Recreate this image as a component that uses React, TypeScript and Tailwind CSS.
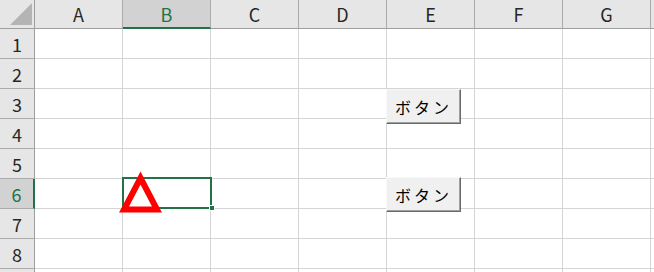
import React from "react";

const cols = ["A", "B", "C", "D", "E", "F", "G", ""];
const rows = [1, 2, 3, 4, 5, 6, 7, 8, 9];

export default function App() {
  return (
    <div
      className="relative w-[654px] h-[272px] overflow-hidden bg-white"
      style={{ fontFamily: '"Noto Sans CJK JP", "Liberation Sans", sans-serif' }}
    >
      <div className="grid grid-cols-[35px_repeat(8,88px)] grid-rows-[29px_repeat(9,30px)]">
        {/* corner */}
        <div className="relative bg-[#e6e6e6] border-r border-b border-[#9e9e9e]">
          <svg className="absolute left-0 top-0" width="35" height="28">
            <polygon points="32,3 32,25 10,25" fill="#b4b4b4" />
          </svg>
        </div>
        {cols.map((c, i) => (
          <div
            key={c + i}
            className={
              c === "B"
                ? "flex items-center justify-center bg-[#d2d2d2] border-r border-[#ababab] border-b-2 border-b-[#217346] text-[18px] text-[#217346]"
                : "flex items-center justify-center bg-[#e6e6e6] border-r border-[#ababab] border-b border-b-[#9e9e9e] text-[18px] text-[#262626]"
            }
          >
            <span className="leading-none">{c}</span>
          </div>
        ))}
        {rows.map((r) => (
          <React.Fragment key={r}>
            <div
              className={
                r === 6
                  ? "flex items-center justify-center bg-[#d2d2d2] border-b border-[#ababab] border-r-2 border-r-[#217346] text-[18px] text-[#217346]"
                  : "flex items-center justify-center bg-[#e6e6e6] border-b border-[#ababab] border-r border-r-[#9e9e9e] text-[18px] text-[#262626]"
              }
            >
              {r < 9 && <span className="leading-none">{r}</span>}
            </div>
            {cols.map((c, i) => (
              <div key={c + i} className="border-r border-b border-[#d4d4d4]" />
            ))}
          </React.Fragment>
        ))}
      </div>

      {/* selection B6 */}
      <div className="absolute left-[122px] top-[177px] w-[90px] h-[32px] border-2 border-[#217346]" />
      <div className="absolute left-[209px] top-[205px] w-[6px] h-[6px] bg-[#217346] border border-white" />

      {/* triangle */}
      <svg className="absolute left-[117px] top-[170px]" width="48" height="48">
        <polygon
          points="23.5,8 40,39.5 7,39.5"
          fill="none"
          stroke="#ff0000"
          strokeWidth="6"
          strokeLinejoin="miter"
        />
      </svg>

      {/* buttons */}
      <div className="absolute left-[386px] top-[89px] w-[75px] h-[35px] flex items-center justify-center bg-[#f0f0f0] border border-t-[#f8f8f8] border-l-[#f8f8f8] border-r-[#696969] border-b-[#696969] shadow-[inset_-1px_-1px_0_#a0a0a0] text-[16px] text-black tracking-[3px]">
        ボタン
      </div>
      <div className="absolute left-[386px] top-[177px] w-[75px] h-[35px] flex items-center justify-center bg-[#f0f0f0] border border-t-[#f8f8f8] border-l-[#f8f8f8] border-r-[#696969] border-b-[#696969] shadow-[inset_-1px_-1px_0_#a0a0a0] text-[16px] text-black tracking-[3px]">
        ボタン
      </div>
    </div>
  );
}
